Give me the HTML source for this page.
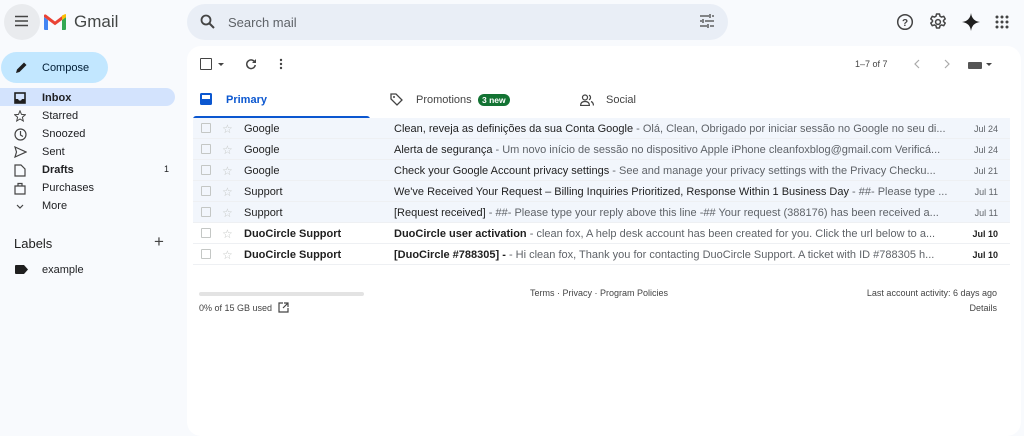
<!DOCTYPE html>
<html><head><meta charset="utf-8"><style>
*{margin:0;padding:0;box-sizing:border-box}
body{width:1024px;height:423px;background:#f8fafd;font-family:"Liberation Sans",Arial,sans-serif;color:#1f1f1f;position:relative;overflow:hidden;font-size:11px}
.a{position:absolute}
.nav{position:absolute;left:0;width:175px;height:18px;display:flex;align-items:center;font-size:11px;color:#202124}
.nav svg{position:absolute;left:14px}
.nav span{position:absolute;left:42px;top:3px}
.row{position:absolute;left:193px;width:817px;height:21px;border-bottom:1px solid #eef0f3;font-size:11px;white-space:nowrap}
.row.r{background:#f2f6fc}
.row .cb{position:absolute;left:8px;top:5px;width:10px;height:10px;border:1px solid #c4c7c5;border-radius:1px}
.row .st{position:absolute;left:29px;top:4px;color:#c4c7c5;font-size:12px}
.row .fr{position:absolute;left:51px;top:5px}
.row .sb{position:absolute;left:201px;top:5px;width:735px;overflow:hidden;text-overflow:ellipsis}
.row .sb i{font-style:normal;color:#5f6368}
.row .dt{position:absolute;right:12px;top:6px;font-size:9px;color:#5f6368}
.row.b .fr,.row.b .sb b,.row.b .dt{font-weight:bold;color:#1f1f1f}
</style></head><body>
<div class="a" style="left:4px;top:4px;width:36px;height:36px;border-radius:50%;background:#e9ebee"></div>
<svg class="a" style="left:14px;top:15px" width="15" height="12"><path d="M1 1.5h13M1 6h13M1 10.5h13" stroke="#444" stroke-width="1.6"/></svg>
<svg class="a" style="left:43px;top:14px" width="24" height="17" viewBox="0 0 24 17"><path d="M1 16V3l4 3v10H2a1 1 0 0 1-1-1z" fill="#4285f4"/><path d="M19 16V6l4-3v12a1 1 0 0 1-1 1z" fill="#34a853"/><path d="M19 1.5l4-1.5V3l-4 3z" fill="#fbbc04"/><path d="M5 6L1 3V1.5C1 .5 2 0 3 .6L12 7.5l7-5.4V6l-7 5.3z" fill="#ea4335"/><path d="M19 2l2-1.4c1-.6 2 0 2 1V3l-4 3z" fill="#fbbc04"/></svg>
<div class="a" style="left:74px;top:12px;font-size:17px;color:#444746">Gmail</div>
<div class="a" style="left:187px;top:4px;width:541px;height:36px;border-radius:18px;background:#e9eef6"></div>
<svg class="a" style="left:200px;top:14px" width="15" height="15"><circle cx="6" cy="6" r="4.5" stroke="#444" stroke-width="1.8" fill="none"/><path d="M9.5 9.5l4.5 4.5" stroke="#444" stroke-width="2"/></svg>
<div class="a" style="left:228px;top:15px;font-size:13px;color:#5f6368">Search mail</div>
<svg class="a" style="left:699px;top:14px" width="16" height="14"><path d="M1 2h9M13 2h2M1 7h2M6 7h9M1 12h7M11 12h4M11 0v4M4 5v4M9 10v4" stroke="#444" stroke-width="1.3"/></svg>
<svg class="a" style="left:896px;top:13px" width="18" height="18"><circle cx="9" cy="9" r="7.3" stroke="#444" stroke-width="1.5" fill="none"/><text x="9" y="13" font-size="10" text-anchor="middle" fill="#444" font-family="Liberation Sans" font-weight="bold">?</text></svg>
<svg class="a" style="left:929px;top:13px" width="18" height="18" viewBox="0 0 18 18"><path d="M7.5 1h3l.5 2.2 1.6.9 2.1-.8 1.5 2.6-1.7 1.5v1.2l1.7 1.5-1.5 2.6-2.1-.8-1.6.9-.5 2.2h-3l-.5-2.2-1.6-.9-2.1.8-1.5-2.6 1.7-1.5V7.4L1.8 5.9l1.5-2.6 2.1.8L7 3.2z" fill="none" stroke="#444" stroke-width="1.5" stroke-linejoin="round"/><circle cx="9" cy="9" r="2.4" stroke="#444" stroke-width="1.5" fill="none"/></svg>
<svg class="a" style="left:962px;top:13px" width="18" height="18"><path d="M9 0Q10 8 18 9Q10 10 9 18Q8 10 0 9Q8 8 9 0z" fill="#1f1f1f"/></svg>
<svg class="a" style="left:995px;top:15px" width="14" height="14" fill="#444"><circle cx="2" cy="2" r="1.5"/><circle cx="7" cy="2" r="1.5"/><circle cx="12" cy="2" r="1.5"/><circle cx="2" cy="7" r="1.5"/><circle cx="7" cy="7" r="1.5"/><circle cx="12" cy="7" r="1.5"/><circle cx="2" cy="12" r="1.5"/><circle cx="7" cy="12" r="1.5"/><circle cx="12" cy="12" r="1.5"/></svg>

<div class="a" style="left:1px;top:52px;width:107px;height:31px;border-radius:16px;background:#c2e7ff"></div>
<svg class="a" style="left:15px;top:61px" width="13" height="13"><path d="M1 12l1-3.5L9 1.5l2.5 2.5L4.5 11z" fill="#1f1f1f"/></svg>
<div class="a" style="left:42px;top:62px;font-size:11px;color:#001d35">Compose</div>
<div class="a" style="left:0;top:88px;width:175px;height:18px;border-radius:0 9px 9px 0;background:#d3e3fd"></div>
<div class="nav" style="top:89px"><svg width="12" height="12"><rect x="1" y="1" width="10" height="10" fill="none" stroke="#1f1f1f" stroke-width="1.6"/><path d="M1 7h3l1 1.5h2L8 7h3v4H1z" fill="#1f1f1f"/></svg><span style="font-weight:bold">Inbox</span></div>
<div class="nav" style="top:107px"><svg width="12" height="12"><path d="M6 .8l1.5 3.6 3.9.3-3 2.5.9 3.8L6 9 2.7 11l.9-3.8-3-2.5 3.9-.3z" fill="none" stroke="#444" stroke-width="1"/></svg><span>Starred</span></div>
<div class="nav" style="top:125px"><svg width="13" height="13"><circle cx="6.5" cy="6.5" r="5.5" fill="none" stroke="#444" stroke-width="1.2"/><path d="M6.5 3v4l2.5 1.5" fill="none" stroke="#444" stroke-width="1.2"/></svg><span>Snoozed</span></div>
<div class="nav" style="top:143px"><svg width="13" height="12"><path d="M1 1l11 5-11 5 1.5-5z" fill="none" stroke="#444" stroke-width="1.2"/></svg><span>Sent</span></div>
<div class="nav" style="top:161px"><svg width="12" height="13"><path d="M1 1h6l4 4v7H1z" fill="none" stroke="#444" stroke-width="1.2"/></svg><span style="font-weight:bold">Drafts</span><span style="left:164px;font-size:9px">1</span></div>
<div class="nav" style="top:179px"><svg width="12" height="13"><path d="M1 4h10v8H1zM4 4V1.5h4V4" fill="none" stroke="#444" stroke-width="1.2"/></svg><span>Purchases</span></div>
<div class="nav" style="top:197px"><svg width="12" height="12"><path d="M3 5l3 3 3-3" fill="none" stroke="#444" stroke-width="1.2"/></svg><span>More</span></div>
<div class="a" style="left:14px;top:236px;font-size:13px;color:#1f1f1f">Labels</div>
<div class="a" style="left:154px;top:232px;font-size:17px;color:#444">+</div>
<svg class="a" style="left:15px;top:265px" width="13" height="9"><path d="M0 1a1 1 0 0 1 1-1h8l4 4.5L9 9H1a1 1 0 0 1-1-1z" fill="#1f1f1f"/></svg>
<div class="a" style="left:42px;top:264px;font-size:11px;color:#202124">example</div>

<div class="a" style="left:187px;top:46px;width:834px;height:390px;border-radius:14px;background:#fff"></div>
<div class="a" style="left:200px;top:58px;width:12px;height:12px;border:1.5px solid #444;border-radius:1px"></div>
<div class="a" style="left:218px;top:63px;border:3px solid transparent;border-top:3.5px solid #444"></div>
<svg class="a" style="left:245px;top:58px" width="12" height="12"><path d="M10 4.5A4.3 4.3 0 1 0 10.3 7" fill="none" stroke="#444" stroke-width="1.5"/><path d="M11 1v4H7z" fill="#444"/></svg>
<svg class="a" style="left:279px;top:58px" width="4" height="12" fill="#444"><circle cx="2" cy="2" r="1.2"/><circle cx="2" cy="6" r="1.2"/><circle cx="2" cy="10" r="1.2"/></svg>
<div class="a" style="left:855px;top:59px;font-size:9px;color:#444">1–7 of 7</div>
<svg class="a" style="left:913px;top:59px" width="8" height="10"><path d="M6 1L2 5l4 4" fill="none" stroke="#aaa" stroke-width="1.2"/></svg>
<svg class="a" style="left:943px;top:59px" width="8" height="10"><path d="M2 1l4 4-4 4" fill="none" stroke="#aaa" stroke-width="1.2"/></svg>
<div class="a" style="left:968px;top:62px;width:14px;height:7px;background:#555;border-radius:1px"></div>
<div class="a" style="left:986px;top:63px;border:3px solid transparent;border-top:3.5px solid #444"></div>

<svg class="a" style="left:200px;top:93px" width="12" height="12"><rect x="0" y="0" width="12" height="12" rx="1.5" fill="#0b57d0"/><rect x="2" y="2" width="8" height="4" fill="#fff"/></svg>
<div class="a" style="left:226px;top:94px;font-size:11px;color:#0b57d0;font-weight:bold">Primary</div>
<div class="a" style="left:193px;top:116px;width:177px;height:3px;background:#0b57d0;border-radius:3px 3px 0 0"></div>
<svg class="a" style="left:390px;top:93px" width="13" height="13"><path d="M1 1h5l6 6-5 5-6-6z" fill="none" stroke="#444" stroke-width="1.3"/><circle cx="4" cy="4" r="1" fill="#444"/></svg>
<div class="a" style="left:416px;top:94px;font-size:11px;color:#444">Promotions</div>
<div class="a" style="left:478px;top:94px;height:12px;padding:0 4px;border-radius:6px;background:#137333;color:#fff;font-size:8.5px;line-height:12px;font-weight:bold">3 new</div>
<svg class="a" style="left:580px;top:94px" width="14" height="12"><circle cx="5" cy="3.5" r="2.5" fill="none" stroke="#444" stroke-width="1.2"/><path d="M0.6 11.5c0-3 2-4 4.4-4s4.4 1 4.4 4z" fill="none" stroke="#444" stroke-width="1.2"/><path d="M9 1.2a2.5 2.5 0 0 1 0 4.6M11 7.5c1.5.5 2.4 2 2.4 4" fill="none" stroke="#444" stroke-width="1.2"/></svg>
<div class="a" style="left:606px;top:94px;font-size:11px;color:#444">Social</div>

<div class="row r" style="top:118px"><div class="cb"></div><div class="st">☆</div><div class="fr">Google</div><div class="sb">Clean, reveja as definições da sua Conta Google <i>- Olá, Clean, Obrigado por iniciar sessão no Google no seu di...</i></div><div class="dt">Jul 24</div></div>
<div class="row r" style="top:139px"><div class="cb"></div><div class="st">☆</div><div class="fr">Google</div><div class="sb">Alerta de segurança <i>- Um novo início de sessão no dispositivo Apple iPhone cleanfoxblog@gmail.com Verificá...</i></div><div class="dt">Jul 24</div></div>
<div class="row r" style="top:160px"><div class="cb"></div><div class="st">☆</div><div class="fr">Google</div><div class="sb">Check your Google Account privacy settings <i>- See and manage your privacy settings with the Privacy Checku...</i></div><div class="dt">Jul 21</div></div>
<div class="row r" style="top:181px"><div class="cb"></div><div class="st">☆</div><div class="fr">Support</div><div class="sb">We've Received Your Request – Billing Inquiries Prioritized, Response Within 1 Business Day <i>- ##- Please type ...</i></div><div class="dt">Jul 11</div></div>
<div class="row r" style="top:202px"><div class="cb"></div><div class="st">☆</div><div class="fr">Support</div><div class="sb">[Request received] <i>- ##- Please type your reply above this line -## Your request (388176) has been received a...</i></div><div class="dt">Jul 11</div></div>
<div class="row b" style="top:223px"><div class="cb"></div><div class="st">☆</div><div class="fr">DuoCircle Support</div><div class="sb"><b>DuoCircle user activation</b> <i>- clean fox, A help desk account has been created for you. Click the url below to a...</i></div><div class="dt">Jul 10</div></div>
<div class="row b" style="top:244px"><div class="cb"></div><div class="st">☆</div><div class="fr">DuoCircle Support</div><div class="sb"><b>[DuoCircle #788305] -</b> <i>- Hi clean fox, Thank you for contacting DuoCircle Support. A ticket with ID #788305 h...</i></div><div class="dt">Jul 10</div></div>

<div class="a" style="left:199px;top:292px;width:165px;height:4px;border-radius:2px;background:#e3e3e3"></div>
<div class="a" style="left:199px;top:303px;font-size:9px;color:#444">0% of 15 GB used</div>
<svg class="a" style="left:278px;top:302px" width="11" height="11"><path d="M5 1H1v9h9V6M6 1h4v4M10 1L5 6" fill="none" stroke="#444" stroke-width="1.2"/></svg>
<div class="a" style="left:530px;top:288px;font-size:9px;color:#444">Terms · Privacy · Program Policies</div>
<div class="a" style="right:27px;top:288px;font-size:9px;color:#444">Last account activity: 6 days ago</div>
<div class="a" style="right:27px;top:303px;font-size:9px;color:#444">Details</div>
</body></html>
